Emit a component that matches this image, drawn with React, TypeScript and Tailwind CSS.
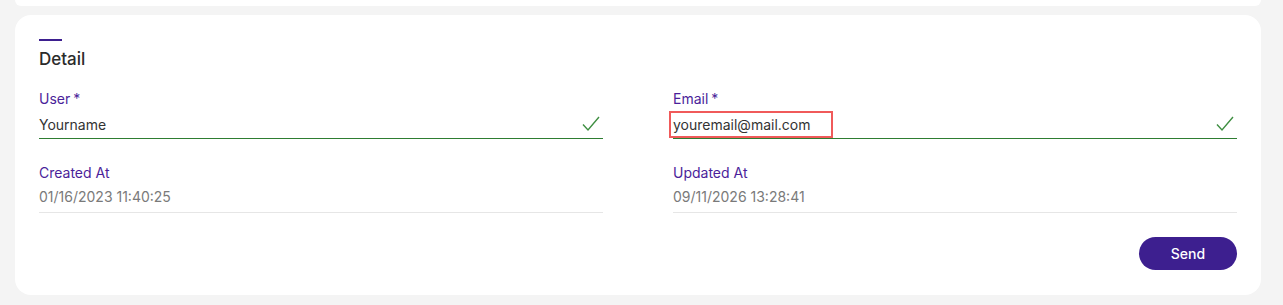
interface Field {
  label: string;
  value: string;
  required?: boolean;
  readOnly?: boolean;
  highlight?: boolean;
}

const rows: Field[][] = [
  [
    { label: "User", value: "Yourname", required: true },
    { label: "Email", value: "youremail@mail.com", required: true, highlight: true },
  ],
  [
    { label: "Created At", value: "01/16/2023 11:40:25", readOnly: true },
    { label: "Updated At", value: "09/11/2026 13:28:41", readOnly: true },
  ],
];

const CheckMark = () => (
  <svg width="18" height="16" viewBox="0 0 18 16" fill="none" className="mr-[3px] mb-[2px]">
    <path d="M1 8.5 L6 14 L17 1" stroke="#3f8f42" strokeWidth="1.4" />
  </svg>
);

const FieldView = ({ field }: { field: Field }) => (
  <div className="flex flex-col">
    <label className="text-[14px] leading-[16px] text-[#4b1f9a]">
      {field.label}
      {field.required && <span className="ml-[3px]">*</span>}
    </label>
    {field.readOnly ? (
      <div className="mt-[6px] h-[26px] border-b border-[#e6e6e6] text-[14px] leading-[20px] text-[#7a7a7a]">
        {field.value}
      </div>
    ) : (
      <div className="mt-[4px] flex h-[28px] items-center justify-between border-b border-[#2e7d32] text-[14px] text-[#333]">
        <span
          className={
            field.highlight
              ? "-ml-[4px] mb-[1px] border-2 border-[#f05a5a] pl-[2px] pr-[20px] leading-[23px]"
              : "leading-[22px]"
          }
        >
          {field.value}
        </span>
        <CheckMark />
      </div>
    )}
  </div>
);

export default function App() {
  return (
    <div className="min-h-[305px] bg-[#f4f4f4] pl-[15px] pr-[22px] font-['Inter',sans-serif]">
      <div className="h-[6px] rounded-b-2xl bg-white" />
      <section className="mt-[9px] rounded-2xl bg-white px-6 pt-6 pb-[25px]">
        <div className="h-[2px] w-[23px] bg-[#3d1f8f]" />
        <h2 className="mt-[8px] text-[17px] font-medium leading-[20px] text-[#2b2b2b]">Detail</h2>
        <div className="mt-[22px] flex flex-col gap-[26px]">
          {rows.map((row, i) => (
            <div key={i} className="grid grid-cols-2 gap-[70px]">
              {row.map((f) => (
                <FieldView key={f.label} field={f} />
              ))}
            </div>
          ))}
        </div>
        <div className="mt-[24px] flex justify-end">
          <button className="h-[33px] w-[98px] rounded-full bg-[#3d1f8f] text-[14px] font-medium text-white">
            Send
          </button>
        </div>
      </section>
    </div>
  );
}
